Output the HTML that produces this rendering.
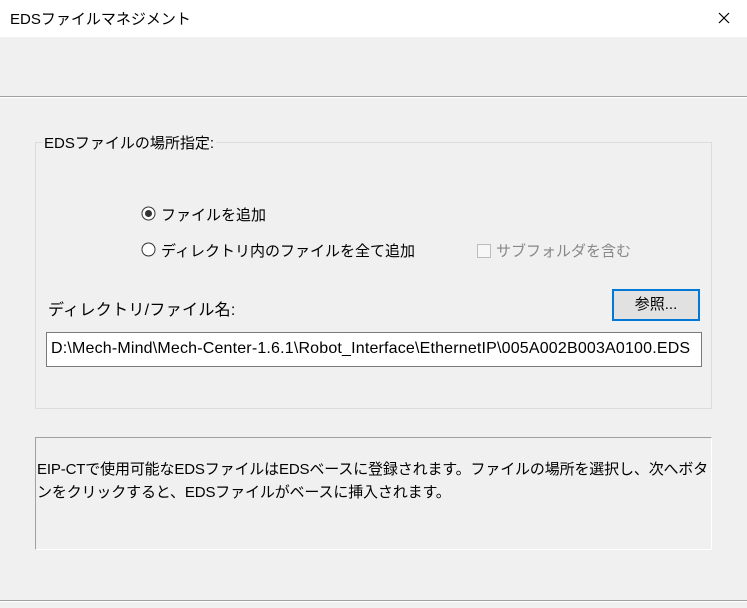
<!DOCTYPE html>
<html><head><meta charset="utf-8"><style>
*{margin:0;padding:0;box-sizing:border-box}
body{width:747px;height:608px;background:#f0f0f0;position:relative;overflow:hidden;font-family:"Liberation Sans","Noto Sans CJK JP",sans-serif;font-size:15px;color:#000}
.a{position:absolute;white-space:nowrap}
</style></head><body>
<div class="a" style="left:0;top:0;width:747px;height:37px;background:#fff"></div>
<div class="a" style="left:10px;top:8px;font-size:15px">EDSファイルマネジメント</div>
<svg class="a" style="left:718px;top:12px" width="12" height="12"><path d="M1 1L11 11M11 1L1 11" stroke="#000" stroke-width="1.2"/></svg>
<div class="a" style="left:0;top:96px;width:747px;height:1px;background:#a0a0a0"></div>
<div class="a" style="left:0;top:97px;width:747px;height:1px;background:#fff"></div>

<div class="a" style="left:35px;top:142px;width:677px;height:267px;border:1px solid #dcdcdc"></div>
<div class="a" style="left:42px;top:132px;background:#f0f0f0;padding:0 2px">EDSファイルの場所指定:</div>

<svg class="a" style="left:141px;top:206px" width="15" height="15"><circle cx="7.5" cy="7.5" r="6.5" fill="#fff" stroke="#333"/><circle cx="7.5" cy="7.5" r="3.5" fill="#333"/></svg>
<div class="a" style="left:161px;top:204px">ファイルを追加</div>
<svg class="a" style="left:141px;top:242px" width="15" height="15"><circle cx="7.5" cy="7.5" r="6.5" fill="#fff" stroke="#333"/></svg>
<div class="a" style="left:161px;top:240px">ディレクトリ内のファイルを全て追加</div>
<div class="a" style="left:477px;top:244px;width:14px;height:14px;border:1px solid #bcbcbc;background:#f7f7f7"></div>
<div class="a" style="left:496px;top:240px;color:#888">サブフォルダを含む</div>

<div class="a" style="left:48px;top:296px;font-size:16px;letter-spacing:0.3px">ディレクトリ/ファイル名:</div>
<div class="a" style="left:612px;top:289px;width:88px;height:32px;border:2px solid #0078d7;background:#e1e1e1;text-align:center;line-height:27px">参照...</div>
<div class="a" style="left:46px;top:332px;width:656px;height:35px;border:1px solid #7a7a7a;background:#fff;padding-left:4px;line-height:32px;font-size:16px;letter-spacing:0.18px">D:\Mech-Mind\Mech-Center-1.6.1\Robot_Interface\EthernetIP\005A002B003A0100.EDS</div>

<div class="a" style="left:35px;top:437px;width:677px;height:113px;border-top:1px solid #a0a0a0;border-left:1px solid #a0a0a0;border-right:1px solid #fff;border-bottom:1px solid #fff"></div>
<div class="a" style="left:37px;top:458px;line-height:23px;font-size:15px;letter-spacing:-0.15px">EIP-CTで使用可能なEDSファイルはEDSベースに登録されます。ファイルの場所を選択し、次へボタ<br>ンをクリックすると、EDSファイルがベースに挿入されます。</div>

<div class="a" style="left:0;top:600px;width:747px;height:1px;background:#a0a0a0"></div>
<div class="a" style="left:0;top:601px;width:747px;height:1px;background:#fff"></div>
</body></html>
